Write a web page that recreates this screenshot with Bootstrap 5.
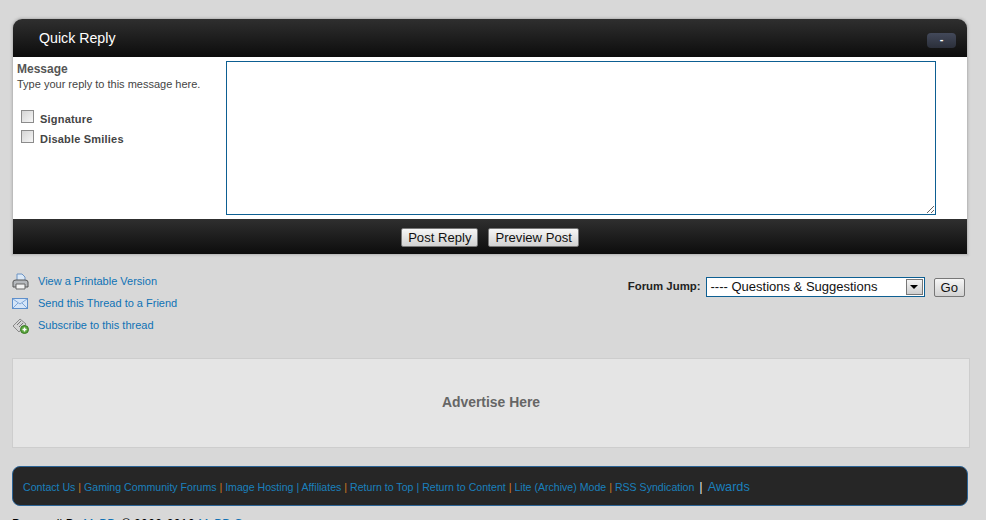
<!DOCTYPE html>
<html lang="en">
<head>
  <meta charset="UTF-8">
  <title>Quick Reply</title>
  <link href="https://cdn.jsdelivr.net/npm/bootstrap@5.3.0/dist/css/bootstrap.min.css" rel="stylesheet">
  <style>
    html, body { height: 520px; overflow: hidden; }
    body {
      background: #d8d8d8;
      font-family: "Liberation Sans", Arial, sans-serif;
      font-size: 13px;
      color: #333;
    }
    a { color: #0f72b5; text-decoration: none; }
    .page-wrap { padding: 19px 19px 0 13px; }
    .reply-box {
      border-radius: 9px 9px 0 0;
      box-shadow: 0 0 0 1px #bcbcbc, 0 0 2px 2px #c6c6c6;
      overflow: hidden;
    }
    .reply-head {
      height: 38px;
      padding: 2px 11px 0 26px;
      background: linear-gradient(#2f2f2f, #0c0c0c);
      color: #fff;
      font-size: 14.2px;
    }
    .collapse-btn {
      width: 29px;
      height: 15px;
      margin-top: 3px;
      border-radius: 4px;
      background: linear-gradient(#43495a, #2b2f3a);
      color: #fff;
      font-size: 11px;
      line-height: 13px;
      text-align: center;
      font-weight: 700;
    }
    .reply-body {
      height: 162px;
      background: #fff;
      padding: 4px 0 0 4px;
    }
    .msg-col { width: 209px; }
    .msg-title { font-size: 12px; font-weight: 700; color: #555; line-height: 15px; margin-top: 1px; }
    .msg-hint { font-size: 11px; line-height: 15px; color: #444; }
    .opt-list { margin-top: 17px; }
    .opt-row { font-size: 11px; font-weight: 700; color: #444; height: 20px; letter-spacing: .2px; }
    .fake-check {
      width: 13px; height: 13px; margin: 0 6px 5px 4px;
      border: 1px solid #8b8b8b;
      background: linear-gradient(135deg, #d4d4d4, #f6f6f6);
      appearance: none;
      border-radius: 0;
    }
    .msg-area {
      width: 710px;
      height: 154px;
      border: 1px solid #0d5f92;
      display: block;
      border-radius: 0;
      outline: 0;
    }
    .reply-foot {
      height: 35px;
      padding-top: 1px;
      background: linear-gradient(#2f2f2f, #0c0c0c);
      gap: 10px;
    }
    .old-btn {
      font-family: "Liberation Sans", Arial, sans-serif;
      font-size: 13.1px;
      line-height: 15px;
      padding: 1px 6px;
      height: 19px;
      border: 1px solid #777;
      border-radius: 2px;
      background: linear-gradient(#f6f6f6, #d2d2d2);
      color: #111;
    }
    .tools-row { margin-top: 16px; height: 88px; }
    .tool-link { font-size: 11px; height: 22px; }
    .tool-link svg { width: 17px; height: 17px; margin: 0 9px 0 -1px; flex: none; }
    .jump-wrap { padding-top: 7px; padding-right: 2px; }
    .jump-label { font-size: 11.4px; font-weight: 700; color: #222; margin-right: 5px; }
    .jump-select {
      width: 219px; height: 20px;
      border: 1px solid #0d5f92;
      background: #fff;
      color: #111;
      font-size: 13px;
      padding-left: 4px;
      margin-right: 9px;
    }
    .jump-arrow {
      width: 17px; height: 16px; margin: 1px;
      border: 1px solid #777;
      background: linear-gradient(#f4f4f4, #cfcfcf);
    }
    .jump-arrow i {
      display: block; width: 0; height: 0;
      border: 4px solid transparent; border-top: 4px solid #000; border-bottom: 0;
    }
    .ad-box {
      height: 90px;
      padding-bottom: 2px;
      border: 1px solid #cdcdcd;
      background: #e5e5e5;
      color: #666;
      font-size: 13.9px;
      font-weight: 700;
      margin: 0 -3px 0 -1px;
    }
    .foot-bar {
      height: 40px;
      margin: 18px -1px 0;
      padding: 2px 10px 0;
      border: 1px solid #2c6496;
      border-radius: 8px;
      background: #262626;
      font-size: 10.6px;
      color: #d07a22;
      white-space: nowrap;
    }
    .foot-bar a { color: #1a80bd; }
    .foot-bar .big-link { font-size: 12.7px; }
    .foot-bar .pale { color: #ddd; font-size: 13px; margin: 0 2px; }
    .foot-bar .blue-sep { color: #1a80bd; }
    .credit { margin: 11px 0 0 -1px; font-size: 12px; color: #000; line-height: 14px; white-space: nowrap; }
    .credit .date-text { letter-spacing: .4px; }
  </style>
</head>
<body>
  <div class="page-wrap">
    <div class="reply-box">
      <div class="reply-head d-flex justify-content-between align-items-center">
        <span>Quick Reply</span>
        <div class="collapse-btn">-</div>
      </div>
      <div class="reply-body d-flex">
        <div class="msg-col">
          <div class="msg-title">Message</div>
          <div class="msg-hint">Type your reply to this message here.</div>
          <div class="opt-list">
            <div class="opt-row d-flex align-items-center"><input type="checkbox" class="fake-check" aria-label="Signature">Signature</div>
            <div class="opt-row d-flex align-items-center"><input type="checkbox" class="fake-check" aria-label="Disable Smilies">Disable Smilies</div>
          </div>
        </div>
        <textarea class="msg-area" aria-label="Message"></textarea>
      </div>
      <div class="reply-foot d-flex justify-content-center align-items-center">
        <button class="old-btn" type="button">Post Reply</button>
        <button class="old-btn" type="button">Preview Post</button>
      </div>
    </div>

    <div class="tools-row d-flex justify-content-between">
      <div>
        <div class="tool-link d-flex align-items-center">
          <svg viewBox="0 0 17 17"><path d="M5 1h5l3 3v5H5z" fill="#dbe8f6" stroke="#6d94c4"/><path d="M1 9q0-2 3-2h9q3 0 3 2v5H1z" fill="#b5b8bc" stroke="#555"/><path d="M4 11h9v5H4z" fill="#f2f2f2" stroke="#666"/></svg>
          <a href="#">View a Printable Version</a>
        </div>
        <div class="tool-link d-flex align-items-center">
          <svg viewBox="0 0 17 17"><rect x=".5" y="3.5" width="15" height="10" fill="#d5e5f8" stroke="#5e8fcb"/><path d="M1 4l7 5 7-5M1 13l5-5M15 13l-5-5" fill="none" stroke="#7ea6d8"/></svg>
          <a href="#">Send this Thread to a Friend</a>
        </div>
        <div class="tool-link d-flex align-items-center">
          <svg viewBox="0 0 17 17"><path d="M1 9l7-7 6 5-7 8z" fill="#d4d4d4" stroke="#8a8a8a"/><path d="M5 8l4-4M7 10l4-4" stroke="#777"/><circle cx="12.5" cy="12.5" r="4" fill="#5aa63c" stroke="#3a7a25"/><path d="M10.5 12.5h4M12.5 10.5v4" stroke="#fff" stroke-width="1.4"/></svg>
          <a href="#">Subscribe to this thread</a>
        </div>
      </div>
      <div class="jump-wrap">
        <div class="d-flex align-items-center">
          <span class="jump-label">Forum Jump:</span>
          <div class="jump-select d-flex justify-content-between align-items-center">
            <span>---- Questions &amp; Suggestions</span>
            <span class="jump-arrow d-flex justify-content-center align-items-center"><i></i></span>
          </div>
          <button class="old-btn" type="button">Go</button>
        </div>
      </div>
    </div>

    <div class="ad-box d-flex justify-content-center align-items-center">Advertise Here</div>

    <div class="foot-bar d-flex align-items-center">
      <span><a href="#">Contact Us</a> | <a href="#">Gaming Community Forums</a> | <a href="#">Image Hosting</a> <span class="blue-sep">|</span> <a href="#">Affiliates</a> | <a href="#">Return to Top</a> <span class="blue-sep">|</span> <a href="#">Return to Content</a> | <a href="#">Lite (Archive) Mode</a> | <a href="#">RSS Syndication</a> <span class="pale">|</span> <a href="#" class="big-link">Awards</a></span>
    </div>
    <div class="credit">Powered| By <a href="#">MyBB</a>, &copy; <span class="date-text">2002-2010</span> <a href="#">MyBB Group</a></div>
  </div>
</body>
</html>
